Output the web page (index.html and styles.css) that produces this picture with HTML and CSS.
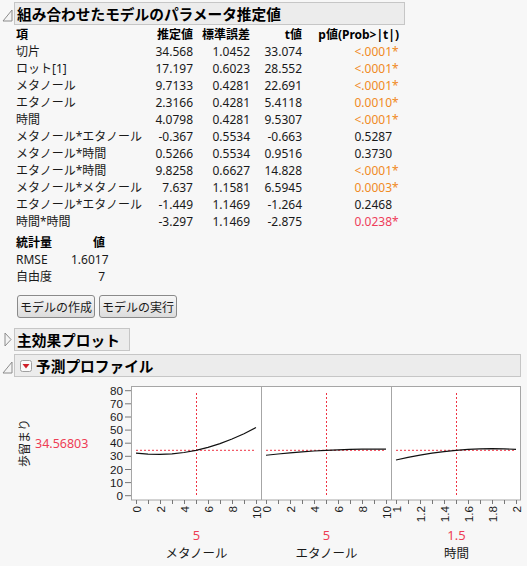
FILE: index.html
```html
<!DOCTYPE html>
<html lang="ja">
<head>
<meta charset="utf-8">
<title>組み合わせたモデルのパラメータ推定値</title>
<link rel="stylesheet" href="styles.css">
</head>
<body>
<div class="outline o1">
  <svg class="disc" viewBox="0 0 14 23"><polygon class="tri" points="12,8 12,19 3,19"/></svg>
  <div class="bar bar1">組み合わせたモデルのパラメータ推定値</div>
</div>
<div class="section">
  <table class="est">
    <col class="c1"><col class="c2"><col class="c3"><col class="c4"><col class="c5">
    <tr class="hd"><td class="term">項</td><td>推定値</td><td>標準誤差</td><td>t値</td><td>p値(Prob&gt;|t|)</td></tr>
    <tr><td class="term">切片</td><td>34.568</td><td>1.0452</td><td>33.074</td><td class="sig">&lt;.0001<span class="st">*</span></td></tr>
    <tr><td class="term">ロット[1]</td><td>17.197</td><td>0.6023</td><td>28.552</td><td class="sig">&lt;.0001<span class="st">*</span></td></tr>
    <tr><td class="term">メタノール</td><td>9.7133</td><td>0.4281</td><td>22.691</td><td class="sig">&lt;.0001<span class="st">*</span></td></tr>
    <tr><td class="term">エタノール</td><td>2.3166</td><td>0.4281</td><td>5.4118</td><td class="sig">0.0010<span class="st">*</span></td></tr>
    <tr><td class="term">時間</td><td>4.0798</td><td>0.4281</td><td>9.5307</td><td class="sig">&lt;.0001<span class="st">*</span></td></tr>
    <tr><td class="term">メタノール*エタノール</td><td>-0.367</td><td>0.5534</td><td>-0.663</td><td>0.5287<span class="st"></span></td></tr>
    <tr><td class="term">メタノール*時間</td><td>0.5266</td><td>0.5534</td><td>0.9516</td><td>0.3730<span class="st"></span></td></tr>
    <tr><td class="term">エタノール*時間</td><td>9.8258</td><td>0.6627</td><td>14.828</td><td class="sig">&lt;.0001<span class="st">*</span></td></tr>
    <tr><td class="term">メタノール*メタノール</td><td>7.637</td><td>1.1581</td><td>6.5945</td><td class="sig">0.0003<span class="st">*</span></td></tr>
    <tr><td class="term">エタノール*エタノール</td><td>-1.449</td><td>1.1469</td><td>-1.264</td><td>0.2468<span class="st"></span></td></tr>
    <tr><td class="term">時間*時間</td><td>-3.297</td><td>1.1469</td><td>-2.875</td><td class="sig2">0.0238<span class="st">*</span></td></tr>
  </table>
  <table class="stats">
    <col class="s1"><col class="s2">
    <tr class="hd"><td class="term">統計量</td><td>値</td></tr>
    <tr><td class="term">RMSE</td><td>1.6017</td></tr>
    <tr><td class="term">自由度</td><td>7</td></tr>
  </table>
  <div class="btns">
    <button class="btn">モデルの作成</button>
    <button class="btn">モデルの実行</button>
  </div>
</div>
<div class="outline o2">
  <svg class="disc" viewBox="0 0 14 23"><polygon class="tri" points="5,5 11,11.5 5,18"/></svg>
  <div class="bar bar2">主効果プロット</div>
</div>
<div class="outline o3">
  <svg class="disc" viewBox="0 0 14 23"><polygon class="tri" points="12,8 12,19 3,19"/></svg>
  <div class="bar bar3">
    <svg class="menu" viewBox="0 0 12 12"><rect x="0.5" y="0.5" width="11" height="11" rx="2" fill="#fafafa" stroke="#a0a0a0"/><polygon points="2.5,4 9.5,4 6,8.5" fill="#d0202a"/></svg>
    <span>予測プロファイル</span>
  </div>
</div>
<div class="profiler">
  <div class="resp">
    <div class="ylab">歩留まり</div>
    <div class="yval">34.56803</div>
  </div>
  <svg class="plot" width="432" height="186" viewBox="0 0 432 186">
    <g class="yt">
      <text x="28" y="119.8">0</text>
      <text x="28" y="106.7">10</text>
      <text x="28" y="93.6">20</text>
      <text x="28" y="80.4">30</text>
      <text x="28" y="67.3">40</text>
      <text x="28" y="54.2">50</text>
      <text x="28" y="41.1">60</text>
      <text x="28" y="27.9">70</text>
      <text x="28" y="14.8">80</text>
    </g>
    <path class="tick" d="M30 115.7H36M30 102.6H36M30 89.5H36M30 76.3H36M30 63.2H36M30 50.1H36M30 37H36M30 23.8H36M30 10.7H36"/>
    <rect x="36.5" y="6.5" width="389" height="113.5" fill="#fff" stroke="#a6a6a6"/>
    <path d="M166.5 6.5V120M296.5 6.5V120" stroke="#a6a6a6"/>
    <path class="tick" d="M41.5 120v4M53.5 120v4M65.5 120v4M77.5 120v4M89.5 120v4M101.5 120v4M113.5 120v4M125.5 120v4M137.5 120v4M149.5 120v4M161.5 120v4M171.5 120v4M183.5 120v4M195.5 120v4M207.5 120v4M219.5 120v4M231.5 120v4M243.5 120v4M255.5 120v4M267.5 120v4M279.5 120v4M291.5 120v4M301.5 120v4M313.5 120v4M325.5 120v4M337.5 120v4M349.5 120v4M361.5 120v4M373.5 120v4M385.5 120v4M397.5 120v4M409.5 120v4M421.5 120v4"/>
    <g class="xt">
      <text x="45.5" y="126" transform="rotate(-90 45.5 126)">0</text>
      <text x="69.5" y="126" transform="rotate(-90 69.5 126)">2</text>
      <text x="93.5" y="126" transform="rotate(-90 93.5 126)">4</text>
      <text x="117.5" y="126" transform="rotate(-90 117.5 126)">6</text>
      <text x="141.5" y="126" transform="rotate(-90 141.5 126)">8</text>
      <text x="165.5" y="126" transform="rotate(-90 165.5 126)">10</text>
      <text x="175.5" y="126" transform="rotate(-90 175.5 126)">0</text>
      <text x="199.5" y="126" transform="rotate(-90 199.5 126)">2</text>
      <text x="223.5" y="126" transform="rotate(-90 223.5 126)">4</text>
      <text x="247.5" y="126" transform="rotate(-90 247.5 126)">6</text>
      <text x="271.5" y="126" transform="rotate(-90 271.5 126)">8</text>
      <text x="295.5" y="126" transform="rotate(-90 295.5 126)">10</text>
      <text x="305.5" y="126" transform="rotate(-90 305.5 126)">1</text>
      <text x="329.5" y="126" transform="rotate(-90 329.5 126)">1.2</text>
      <text x="353.5" y="126" transform="rotate(-90 353.5 126)">1.4</text>
      <text x="377.5" y="126" transform="rotate(-90 377.5 126)">1.6</text>
      <text x="401.5" y="126" transform="rotate(-90 401.5 126)">1.8</text>
      <text x="425.5" y="126" transform="rotate(-90 425.5 126)">2</text>
    </g>
    <path class="ref" d="M41 70.3H161M171 70.3H291M301 70.3H421M101.5 13V115M231.5 13V115M361.5 13V115"/>
    <polyline class="curve" points="41,73.05 53,74.11 65,74.37 77,73.83 89,72.48 101,70.33 113,67.38 125,63.63 137,59.07 149,53.72 161,47.56"/>
    <polyline class="curve" points="171,75.27 183,73.98 195,72.84 207,71.85 219,71.01 231,70.33 243,69.8 255,69.42 267,69.19 279,69.11 291,69.19"/>
    <polyline class="curve" points="301,80.01 313,77.38 325,75.1 337,73.16 349,71.57 361,70.33 373,69.43 385,68.88 397,68.67 409,68.82 421,69.3"/>
    <g class="fv">
      <text x="101.5" y="159.5">5</text>
      <text x="231.5" y="159.5">5</text>
      <text x="361.5" y="159.5">1.5</text>
    </g>
    <g class="fn">
      <text x="101.5" y="178">メタノール</text>
      <text x="231.5" y="178">エタノール</text>
      <text x="361.5" y="178">時間</text>
    </g>
  </svg>
</div>
</body>
</html>
```

FILE: styles.css
```css
* { box-sizing: border-box; }
html, body { margin: 0; padding: 0; }
body {
  background: #f7f7f7;
  font-family: "Noto Sans", "Noto Sans CJK JP", sans-serif;
  font-size: 12px;
  color: #1a1a1a;
  width: 527px;
  height: 566px;
  overflow: hidden;
}
.outline { display: flex; align-items: center; }
.o1 { margin-top: 2px; }
.o2 { margin-top: 10px; }
.o3 { margin-top: 3px; }
.disc { width: 14px; height: 23px; flex: none; display: block; }
.tri { fill: #f4f4f4; stroke: #8c8c8c; stroke-width: 1; }
.bar {
  height: 23px;
  border: 1px solid #c6c6c6;
  background: #ececec;
  font-family: "Noto Sans CJK JP", sans-serif;
  font-weight: bold;
  font-size: 14.7px;
  line-height: 21px;
  padding-left: 2px;
  color: #000;
  white-space: nowrap;
}
.bar1 { width: 391px; }
.bar2 { width: 116px; }
.bar3 { width: 507px; display: flex; align-items: center; gap: 4px; padding-left: 5px; }
.menu { width: 12px; height: 12px; display: block; }
.section { padding-left: 16px; }
table { border-collapse: collapse; table-layout: fixed; }
td { padding: 0; height: 17px; line-height: 17px; white-space: nowrap; text-align: right; }
td.term { text-align: left; }
tr.hd td { font-weight: bold; color: #000; }
.est { margin-top: 1px; width: 383px; }
.c1 { width: 130px; }
.c2 { width: 47px; }
.c3 { width: 57px; }
.c4 { width: 52px; }
.c5 { width: 97px; }
.st { display: inline-block; width: 7px; text-align: left; }
.sig { color: #f08a24; }
.sig2 { color: #ee3d5a; }
.stats { margin-top: 4px; width: 89px; }
.s1 { width: 55px; }
.s2 { width: 34px; }
.btns { display: flex; gap: 4px; margin-top: 10px; padding-left: 1px; }
.btn {
  height: 23px;
  margin: 0;
  padding: 0 2px;
  border: 1px solid #8a8a8a;
  border-radius: 3px;
  background: linear-gradient(#f7f7f7, #dcdcdc);
  font-family: "Noto Sans CJK JP", sans-serif;
  font-size: 12px;
  line-height: 21px;
  color: #1a1a1a;
}
.profiler { display: flex; margin-top: 3px; }
.resp {
  width: 95px;
  height: 126px;
  flex: none;
  display: flex;
  align-items: center;
  padding-left: 17px;
  gap: 4px;
}
.ylab {
  writing-mode: vertical-rl;
  text-orientation: sideways;
  transform: rotate(180deg);
  font-family: "Noto Sans CJK JP", sans-serif;
  font-size: 12px;
  line-height: 14px;
}
.yval { color: #ee3d55; font-size: 12.5px; }
.plot { display: block; flex: none; font-family: "Noto Sans", "Noto Sans CJK JP", sans-serif; }
.yt text { font-family: "Liberation Sans", sans-serif; font-size: 11.7px; text-anchor: end; fill: #1a1a1a; }
.xt text { font-family: "Liberation Sans", sans-serif; font-size: 11.7px; text-anchor: end; fill: #1a1a1a; }
.tick { stroke: #777; stroke-width: 1; fill: none; }
.ref { stroke: #ee3344; stroke-width: 1; stroke-dasharray: 2 2; fill: none; }
.curve { stroke: #111; stroke-width: 1.2; fill: none; }
.fv text { font-size: 13px; text-anchor: middle; fill: #ee3d55; }
.fn text { font-size: 12.5px; text-anchor: middle; fill: #1a1a1a; font-family: "Noto Sans CJK JP", sans-serif; }
```
